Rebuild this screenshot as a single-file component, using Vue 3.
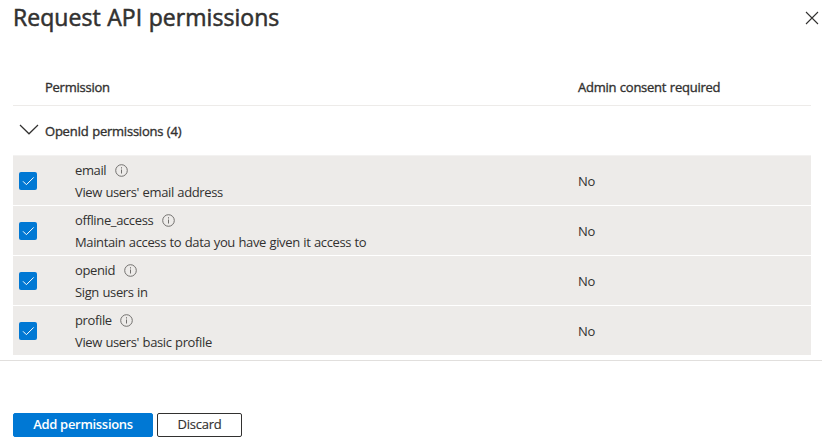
<script setup>
const permissions = [
  { name: 'email', description: "View users' email address", consent: 'No' },
  { name: 'offline_access', description: 'Maintain access to data you have given it access to', consent: 'No' },
  { name: 'openid', description: 'Sign users in', consent: 'No' },
  { name: 'profile', description: "View users' basic profile", consent: 'No' },
]
</script>

<template>
  <main class="panel">
    <header class="top">
      <h1>Request API permissions</h1>
      <svg class="close" width="14" height="14" viewBox="0 0 14 14"><path d="M1 1l12 12M13 1L1 13" /></svg>
    </header>

    <section class="grid">
      <div class="columns">
        <span class="permission-head">Permission</span>
        <span class="consent-head">Admin consent required</span>
      </div>
      <div class="group">
        <svg class="chevron" width="20" height="12" viewBox="0 0 20 12"><path d="M1 1l9 8.8L19 1" /></svg>
        <span>OpenId permissions (4)</span>
      </div>
      <div v-for="p in permissions" :key="p.name" class="row">
        <span class="check">
          <svg width="18" height="18" viewBox="0 0 18 18"><path d="M4 9.3l3.4 3.4L14.7 5.4" /></svg>
        </span>
        <div class="detail">
          <div class="name">
            <span>{{ p.name }}</span>
            <svg class="info" width="13" height="13" viewBox="0 0 13 13">
              <circle cx="6.5" cy="6.5" r="5.8" />
              <path d="M6.5 5.5v4M6.5 3.2v1.3" />
            </svg>
          </div>
          <div class="description">{{ p.description }}</div>
        </div>
        <span class="consent">{{ p.consent }}</span>
      </div>
    </section>

    <footer class="actions">
      <button class="primary">Add permissions</button>
      <button class="secondary">Discard</button>
    </footer>
  </main>
</template>

<style>
body {
  margin: 0;
  background: #fff;
}
</style>

<style scoped>
.panel {
  box-sizing: border-box;
  width: 822px;
  height: 444px;
  overflow: hidden;
  color: #323130;
  font-family: 'Segoe UI', 'Open Sans', 'Noto Sans', sans-serif;
  font-size: 13px;
  line-height: 18px;
  letter-spacing: -0.37px;
  word-spacing: 0.5px;
  white-space: nowrap;
}
svg {
  display: block;
  flex: none;
  fill: none;
}
.top {
  box-sizing: border-box;
  display: flex;
  justify-content: space-between;
  height: 70px;
  padding: 1px 3px 0 13px;
}
h1 {
  margin: 0;
  font-size: 23px;
  line-height: 32px;
  font-weight: 400;
  letter-spacing: 0.05px;
  -webkit-text-stroke: 0.55px #323130;
}
.close {
  margin-top: 10px;
  stroke: #323130;
  stroke-width: 1.1;
}
.grid {
  width: 798px;
  margin-left: 13px;
}
.columns {
  box-sizing: border-box;
  display: flex;
  align-items: center;
  height: 36px;
  padding: 0 0 2px 32px;
  border-bottom: 1px solid #edebe9;
  letter-spacing: -0.25px;
  -webkit-text-stroke: 0.35px #323130;
}
.permission-head {
  width: 533px;
}
.group {
  display: flex;
  align-items: center;
  height: 49px;
  padding-left: 6px;
  gap: 6px;
  letter-spacing: -0.23px;
  -webkit-text-stroke: 0.35px #323130;
}
.chevron {
  margin-top: -2px;
  stroke: #323130;
  stroke-width: 1.2;
}
.row {
  box-sizing: border-box;
  display: flex;
  align-items: center;
  height: 50px;
  padding-left: 6px;
  border-top: 1px solid #fff;
  background: #edebe9;
}
.group + .row {
  border-top-color: #f3f2f1;
}
.check {
  width: 18px;
  height: 18px;
  margin-top: 1px;
  border-radius: 2px;
  background: #0078d4;
}
.check svg {
  stroke: #fff;
  stroke-width: 1;
}
.detail {
  width: 503px;
  margin-left: 38px;
}
.name {
  display: flex;
  align-items: center;
  height: 22px;
  gap: 8.5px;
}
.info {
  margin-top: 2px;
  stroke: #72706e;
  stroke-width: 1;
}
.description {
  line-height: 22px;
}
.consent {
  margin-top: 1px;
}
.actions {
  box-sizing: border-box;
  display: flex;
  gap: 4px;
  height: 84px;
  margin-top: 5px;
  padding: 52px 0 0 13px;
  border-top: 1px solid #e1dfdd;
}
button {
  box-sizing: border-box;
  height: 24px;
  padding: 0 0 2px;
  border: 1px solid #323130;
  border-radius: 2px;
  background: #fff;
  color: #323130;
  font: inherit;
  line-height: 20px;
}
.primary {
  width: 140px;
  border-color: #0078d4;
  background: #0078d4;
  color: #fff;
  font-weight: 600;
  letter-spacing: -0.3px;
}
.secondary {
  width: 85px;
  letter-spacing: -0.25px;
  -webkit-text-stroke: 0.15px #323130;
}
</style>
